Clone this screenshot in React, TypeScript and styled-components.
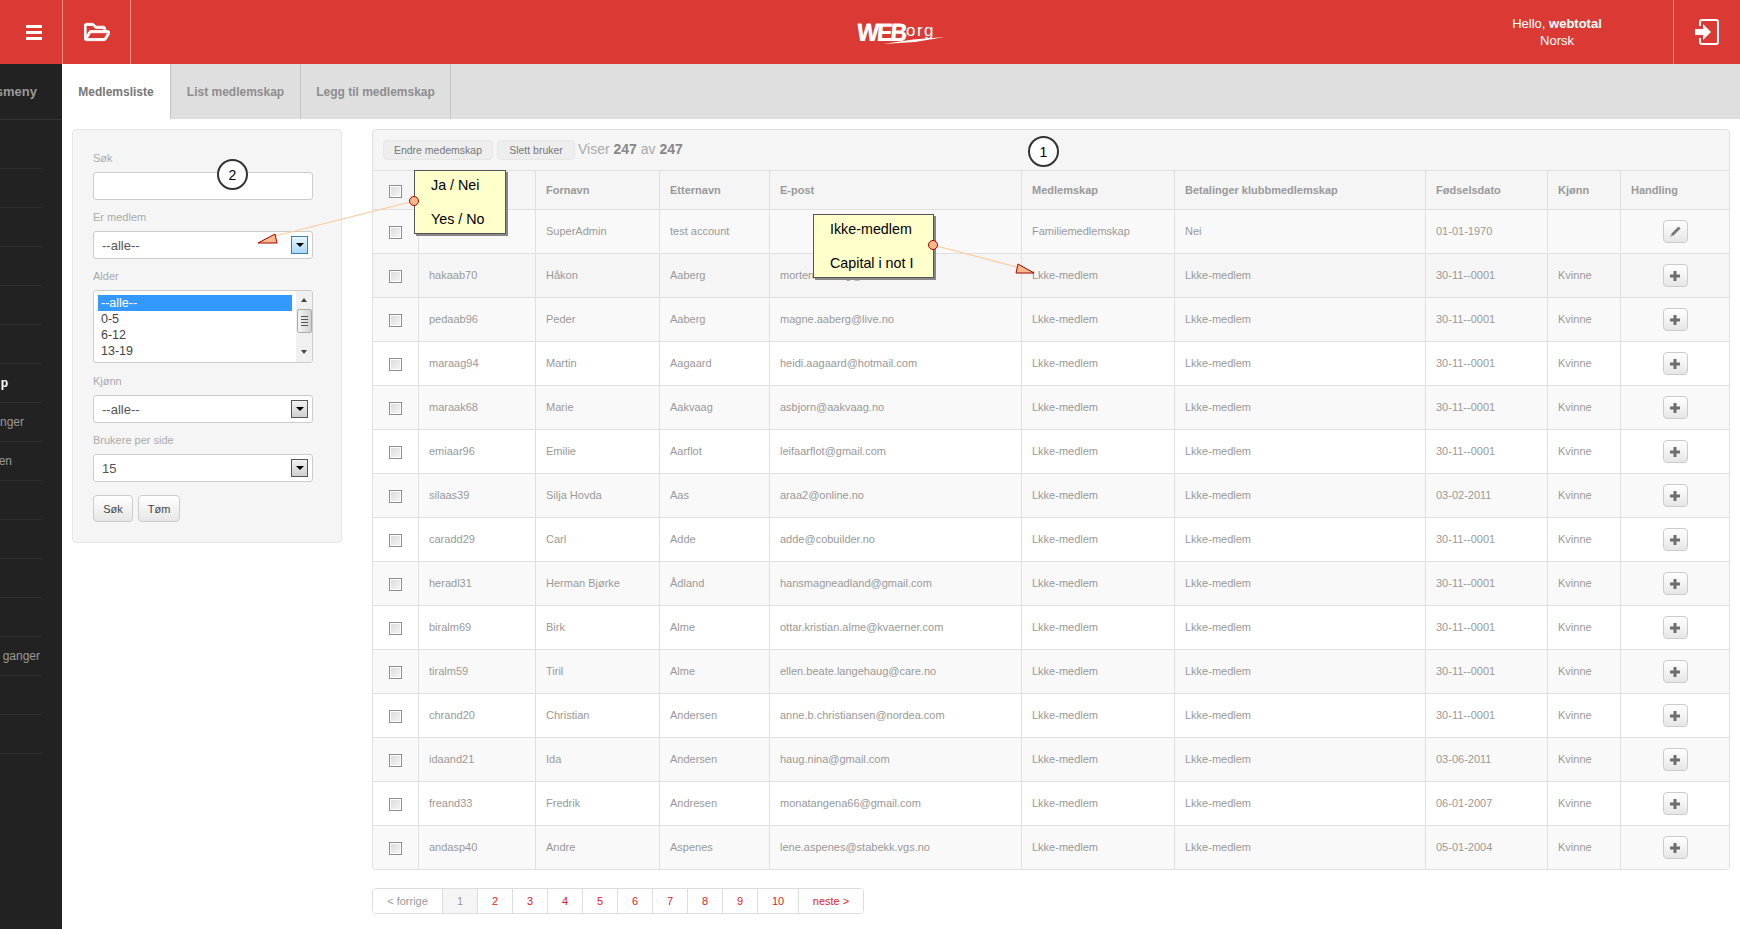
import React from "react";
import styled, { createGlobalStyle } from "styled-components";
import { FaRegFolderOpen } from "react-icons/fa";

const Global = createGlobalStyle`
  html, body { margin: 0; padding: 0; background: #fff; }
  body { font-family: "Liberation Sans", Arial, sans-serif; }
  * { box-sizing: border-box; }
`;

const Page = styled.div`
  position: relative;
  width: 1740px;
  height: 929px;
  overflow: hidden;
  display: flex;
  flex-direction: column;
`;

const Header = styled.header`
  height: 64px;
  flex: none;
  display: flex;
  align-items: stretch;
  background: #db3a34;
  color: #fff;
`;

const HeaderCell = styled.div<{ $w: number; $side?: "left" | "right" }>`
  width: ${(p) => p.$w}px;
  flex: none;
  display: flex;
  align-items: center;
  justify-content: center;
  border-${(p) => (p.$side === "left" ? "left" : "right")}: 1px solid #ee8a86;
`;

const Burger = styled.span`
  display: flex;
  flex-direction: column;
  gap: 3px;
  width: 16px;
  margin-left: 6px;
  & > i { display: block; height: 3px; background: #fff; }
`;

const LogoArea = styled.div`
  flex: 1;
  display: flex;
  align-items: center;
  justify-content: center;
  padding-left: 202px;
`;

const Logo = styled.div`
  position: relative;
  width: 88px;
  height: 28px;
  display: flex;
  align-items: center;
  color: #fff;
  white-space: nowrap;
`;

const LogoWeb = styled.span`
  width: 48px;
  font-size: 25px;
  font-weight: 700;
  letter-spacing: -2px;
  line-height: 27px;
  transform: scaleX(0.92) skewX(-5deg);
  transform-origin: left center;
  text-shadow: 0.6px 0 0 #fff;
`;

const LogoOrg = styled.span`
  font-size: 17px;
  letter-spacing: 1.5px;
  line-height: 17px;
  margin-left: 1px;
  margin-top: -3px;
`;

const Swoosh = styled.svg`
  position: absolute;
  left: 26px;
  top: 19px;
`;

const UserBlock = styled.div`
  width: 204px;
  flex: none;
  display: flex;
  flex-direction: column;
  align-items: center;
  justify-content: center;
  gap: 3px;
  padding-right: 28px;
  font-size: 13px;
  line-height: 14px;
`;

const Body = styled.div`
  flex: 1;
  display: flex;
  min-height: 0;
`;

const Sidebar = styled.nav`
  width: 62px;
  flex: none;
  background: #222;
  overflow: hidden;
`;

const SideTitle = styled.div`
  height: 56px;
  display: flex;
  align-items: center;
  justify-content: flex-end;
  padding: 0 25px 1px 0;
  border-bottom: 1px solid #333;
  color: #999;
  font-size: 13px;
  font-weight: 700;
`;

const SideItem = styled.div<{ $end: number; $tall?: boolean; $active?: boolean }>`
  width: 42px;
  height: ${(p) => (p.$tall ? 49 : 39)}px;
  display: flex;
  align-items: center;
  justify-content: flex-end;
  padding-right: ${(p) => 42 - p.$end}px;
  border-bottom: 1px solid #2e2e2e;
  color: ${(p) => (p.$active ? "#fff" : "#999")};
  font-size: 12px;
  font-weight: ${(p) => (p.$active ? 700 : 400)};
  white-space: nowrap;
`;

const Main = styled.main`
  flex: 1;
  min-width: 0;
  display: flex;
  flex-direction: column;
`;

const Tabs = styled.div`
  height: 55px;
  flex: none;
  display: flex;
  background: #e0dfdf;
`;

const Tab = styled.div<{ $w: number; $active?: boolean }>`
  width: ${(p) => p.$w}px;
  display: flex;
  align-items: center;
  justify-content: center;
  background: ${(p) => (p.$active ? "#fff" : "transparent")};
  border-right: 1px solid #c4c4c4;
  color: ${(p) => (p.$active ? "#777" : "#8d8d8d")};
  font-size: 12px;
  font-weight: 700;
`;

const Content = styled.div`
  flex: 1;
  display: flex;
  align-items: flex-start;
  gap: 30px;
  padding: 10px 11px 0 10px;
`;

const FilterPanel = styled.form`
  width: 270px;
  height: 414px;
  flex: none;
  padding: 20px 28px 0 20px;
  background: #f5f5f5;
  border: 1px solid #e6e6e6;
  border-radius: 4px;
`;

const FieldLabel = styled.label`
  display: block;
  height: 16px;
  margin-bottom: 6px;
  color: #aaa;
  font-size: 11px;
  line-height: 16px;
`;

const Field = styled.div<{ $gap?: number }>`
  margin-bottom: ${(p) => p.$gap ?? 9}px;
`;

const TextBox = styled.div`
  height: 28px;
  background: #fff;
  border: 1px solid #ccc;
  border-radius: 3px;
`;

const SelectBox = styled(TextBox)`
  display: flex;
  align-items: center;
  justify-content: space-between;
  padding: 0 4px 0 8px;
  color: #555;
  font-size: 13px;
`;

const SelectArrow = styled.span<{ $hot?: boolean }>`
  width: 17px;
  height: 18px;
  display: flex;
  align-items: center;
  justify-content: center;
  border: 1px solid ${(p) => (p.$hot ? "#3c7fb1" : "#555")};
  background: ${(p) =>
    p.$hot
      ? "linear-gradient(#eaf6fd, #a7d9f5)"
      : "linear-gradient(#f2f2f2, #cfcfcf)"};
  &::after {
    content: "";
    border-style: solid;
    border-width: 4px 4px 0;
    border-color: #000 transparent transparent;
  }
`;

const ListBox = styled.div`
  height: 73px;
  display: flex;
  background: #fff;
  border: 1px solid #ccc;
  border-radius: 3px;
  overflow: hidden;
`;

const Options = styled.div`
  flex: 1;
  padding: 4px 4px 0 4px;
`;

const Option = styled.div<{ $selected?: boolean }>`
  height: 16px;
  padding-left: 3px;
  color: ${(p) => (p.$selected ? "#fff" : "#444")};
  background: ${(p) => (p.$selected ? "#3399ff" : "transparent")};
  font-size: 12.5px;
  line-height: 16px;
`;

const ScrollTrack = styled.div`
  width: 16px;
  flex: none;
  display: flex;
  flex-direction: column;
  align-items: center;
  padding-top: 7px;
  background: #f0f0f0;
`;

const ScrollUp = styled.span`
  border-style: solid;
  border-width: 0 3.5px 4px;
  border-color: transparent transparent #444;
`;

const ScrollThumb = styled.span`
  width: 15px;
  height: 24px;
  margin: 7px 0 17px;
  display: flex;
  flex-direction: column;
  align-items: center;
  justify-content: center;
  gap: 2px;
  border: 1px solid #aaa;
  border-radius: 2px;
  background: linear-gradient(90deg, #f4f4f4, #d2d2d2);
  & > i { display: block; width: 7px; height: 1px; background: #555; }
`;

const ScrollDown = styled.span`
  border-style: solid;
  border-width: 4px 3.5px 0;
  border-color: #444 transparent transparent;
`;

const FormButtons = styled.div`
  display: flex;
  gap: 5px;
`;

const FormButton = styled.button<{ $w: number }>`
  width: ${(p) => p.$w}px;
  height: 27px;
  padding: 0;
  border: 1px solid #ccc;
  border-radius: 4px;
  background: linear-gradient(#fff, #e6e6e6);
  color: #444;
  font: 11px "Liberation Sans", Arial, sans-serif;
`;

const TablePanel = styled.section`
  width: 1358px;
  flex: none;
  background: #f5f5f5;
  border: 1px solid #e0e0e0;
  border-radius: 4px;
  overflow: hidden;
`;

const Toolbar = styled.div`
  height: 41px;
  display: flex;
  align-items: flex-start;
  gap: 4px;
  padding: 10px 0 0 10px;
  border-bottom: 1px solid #e0e0e0;
`;

const ToolButton = styled.button<{ $w: number }>`
  width: ${(p) => p.$w}px;
  height: 20px;
  padding: 0;
  border: 1px solid #e6e6e6;
  border-radius: 4px;
  background: #eee;
  color: #777;
  font: 10.5px "Liberation Sans", Arial, sans-serif;
`;

const Counter = styled.div`
  margin-left: -1px;
  color: #aaa;
  font-size: 14px;
  line-height: 19px;
  & > b { color: #888; }
`;

const Table = styled.table`
  width: 1356px;
  table-layout: fixed;
  border-collapse: separate;
  border-spacing: 0;
`;

const Th = styled.th`
  height: 39px;
  padding: 0 10px;
  background: #f5f5f5;
  border-bottom: 1px solid #e0e0e0;
  border-right: 1px solid #e0e0e0;
  color: #999;
  font-size: 11px;
  font-weight: 700;
  text-align: left;
  &:last-child { border-right: 0; }
`;

const Td = styled.td`
  height: 44px;
  padding: 0 10px 2px;
  border-bottom: 1px solid #e0e0e0;
  border-right: 1px solid #e0e0e0;
  color: #999;
  font-size: 11px;
  white-space: nowrap;
  text-align: left;
  &:last-child { border-right: 0; }
`;

const ActionCell = styled(Td)`
  padding: 0;
  text-align: center;
`;

const CheckCell = styled(Td)`
  padding: 0;
  text-align: center;
`;

const CheckHead = styled(Th)`
  padding: 0;
  text-align: center;
`;

const Row = styled.tr<{ $bg: string }>`
  background: ${(p) => p.$bg};
  &:last-child > td { border-bottom: 0; height: 43px; }
`;

const Check = styled.input.attrs({ type: "checkbox" })`
  appearance: none;
  display: inline-block;
  width: 13px;
  height: 13px;
  margin: 2px 0 0;
  vertical-align: middle;
  border: 1px solid #8e8e8e;
  outline: 0;
  background: linear-gradient(135deg, #d8d8d8, #f6f6f6);
  box-shadow: inset 0 0 0 1px #fff;
`;

const ActionButton = styled.button`
  width: 25px;
  height: 23px;
  padding: 0;
  display: inline-flex;
  align-items: center;
  justify-content: center;
  vertical-align: middle;
  border: 1px solid #ccc;
  border-radius: 4px;
  background: linear-gradient(#fff, #e6e6e6);
`;

const Pager = styled.div`
  display: inline-flex;
  align-self: flex-start;
  height: 26px;
  margin-top: 18px;
  background: #fff;
  border: 1px solid #ddd;
  border-radius: 4px;
  overflow: hidden;
`;

const PageCell = styled.span<{ $w: number; $state?: "muted" | "current" }>`
  width: ${(p) => p.$w}px;
  display: flex;
  align-items: center;
  justify-content: center;
  border-right: 1px solid #ddd;
  background: ${(p) => (p.$state === "current" ? "#f5f5f5" : "#fff")};
  color: ${(p) => (p.$state ? "#999" : "#e3202a")};
  font-size: 11px;
  &:last-child { border-right: 0; }
`;

const TableColumn = styled.div`
  display: flex;
  flex-direction: column;
`;

const Callout = styled.div<{ $x: number; $y: number; $w: number; $h: number }>`
  position: absolute;
  left: ${(p) => p.$x}px;
  top: ${(p) => p.$y}px;
  width: ${(p) => p.$w}px;
  height: ${(p) => p.$h}px;
  padding: 4px 0 0 16px;
  display: flex;
  flex-direction: column;
  gap: 14px;
  background: #ffffcc;
  border: 1px solid #555;
  box-shadow: 2px 2px 0 #888;
  color: #000;
  font-size: 14.3px;
  line-height: 20px;
`;

const Badge = styled.div<{ $x: number; $y: number }>`
  position: absolute;
  left: ${(p) => p.$x}px;
  top: ${(p) => p.$y}px;
  width: 31px;
  height: 31px;
  display: flex;
  align-items: center;
  justify-content: center;
  background: #fff;
  border: 2px solid #333;
  border-radius: 50%;
  color: #000;
  font-size: 14px;
`;

const Overlay = styled.svg`
  position: absolute;
  left: 0;
  top: 0;
  pointer-events: none;
`;

type R = [string, string, string, string, string?];
const rows: R[] = [
  ["hakaab70", "Håkon", "Aaberg", "morten.aaberg@hotmail.no"],
  ["pedaab96", "Peder", "Aaberg", "magne.aaberg@live.no"],
  ["maraag94", "Martin", "Aagaard", "heidi.aagaard@hotmail.com"],
  ["maraak68", "Marie", "Aakvaag", "asbjorn@aakvaag.no"],
  ["emiaar96", "Emilie", "Aarflot", "leifaarflot@gmail.com"],
  ["silaas39", "Silja Hovda", "Aas", "araa2@online.no", "03-02-2011"],
  ["caradd29", "Carl", "Adde", "adde@cobuilder.no"],
  ["heradl31", "Herman Bjørke", "Ådland", "hansmagneadland@gmail.com"],
  ["biralm69", "Birk", "Alme", "ottar.kristian.alme@kvaerner.com"],
  ["tiralm59", "Tiril", "Alme", "ellen.beate.langehaug@care.no"],
  ["chrand20", "Christian", "Andersen", "anne.b.christiansen@nordea.com"],
  ["idaand21", "Ida", "Andersen", "haug.nina@gmail.com", "03-06-2011"],
  ["freand33", "Fredrik", "Andresen", "monatangena66@gmail.com", "06-01-2007"],
  ["andasp40", "Andre", "Aspenes", "lene.aspenes@stabekk.vgs.no", "05-01-2004"],
];

const columns = [46, 117, 124, 110, 252, 153, 251, 122, 73, 108];
const heads = ["", "Brukernavn", "Fornavn", "Etternavn", "E-post", "Medlemskap", "Betalinger klubbmedlemskap", "Fødselsdato", "Kjønn", "Handling"];

const sideItems: { text: string; end: number; active?: boolean }[] = [
  { text: "", end: 0 }, { text: "", end: 0 }, { text: "", end: 0 }, { text: "", end: 0 }, { text: "", end: 0 }, { text: "", end: 0 },
  { text: "p", end: 8, active: true },
  { text: "nger", end: 24 },
  { text: "en", end: 12 },
  { text: "", end: 0 }, { text: "", end: 0 }, { text: "", end: 0 }, { text: "", end: 0 },
  { text: "ganger", end: 40 },
  { text: "", end: 0 }, { text: "", end: 0 },
];

const pages: { label: string; w: number; state?: "muted" | "current" }[] = [
  { label: "< forrige", w: 70, state: "muted" },
  { label: "1", w: 35, state: "current" },
  ...["2", "3", "4", "5", "6", "7", "8", "9"].map((label) => ({ label, w: 35 })),
  { label: "10", w: 41 },
  { label: "neste >", w: 64 },
];

const Pencil = () => (
  <svg width="14" height="14" viewBox="0 0 14 14">
    <path d="M10.5 1.5l2 2L5 11l-2-2z" fill="#777" />
    <path d="M3 9l2 2-3 1z" fill="#aaa" />
  </svg>
);

const Plus = () => (
  <svg width="10" height="10" viewBox="0 0 10 10">
    <path d="M3.5 0h3v3.5H10v3H6.500V10h-3V6.500H0v-3h3.500z" fill="#6e6e6e" />
  </svg>
);

const SignIn = () => (
  <svg width="24" height="26" viewBox="0 0 24 26">
    <path d="M5 7V3a2 2 0 0 1 2-2h14a2 2 0 0 1 2 2v20a2 2 0 0 1-2 2H7a2 2 0 0 1-2-2v-4" fill="none" stroke="#fff" strokeWidth="2" />
    <path d="M0 10h8V5l8 8-8 8v-5H0z" fill="#fff" />
  </svg>
);

export default function App() {
  return (
    <Page>
      <Global />
      <Header>
        <HeaderCell $w={63}>
          <Burger><i /><i /><i /></Burger>
        </HeaderCell>
        <HeaderCell $w={68}>
          <FaRegFolderOpen size={26} color="#fff" stroke="#fff" strokeWidth={18} />
        </HeaderCell>
        <LogoArea>
          <Logo>
            <LogoWeb>WEB</LogoWeb>
            <LogoOrg>org</LogoOrg>
            <Swoosh width="62" height="8" viewBox="0 0 62 8">
              <path d="M0 7 L30 2.500 L62 0 L32 5 Z" fill="#fff" />
            </Swoosh>
          </Logo>
        </LogoArea>
        <UserBlock>
          <span>Hello, <b>webtotal</b></span>
          <span>Norsk</span>
        </UserBlock>
        <HeaderCell $w={67} $side="left">
          <SignIn />
        </HeaderCell>
      </Header>
      <Body>
        <Sidebar>
          <SideTitle>smeny</SideTitle>
          {sideItems.map((it, i) => (
            <SideItem key={i} $end={it.end} $tall={i === 0} $active={it.active}>
              {it.text}
            </SideItem>
          ))}
        </Sidebar>
        <Main>
          <Tabs>
            <Tab $w={109} $active>Medlemsliste</Tab>
            <Tab $w={130}>List medlemskap</Tab>
            <Tab $w={150}>Legg til medlemskap</Tab>
          </Tabs>
          <Content>
            <FilterPanel>
              <Field>
                <FieldLabel>Søk</FieldLabel>
                <TextBox />
              </Field>
              <Field>
                <FieldLabel>Er medlem</FieldLabel>
                <SelectBox>--alle--<SelectArrow $hot /></SelectBox>
              </Field>
              <Field $gap={10}>
                <FieldLabel>Alder</FieldLabel>
                <ListBox>
                  <Options>
                    <Option $selected>--alle--</Option>
                    <Option>0-5</Option>
                    <Option>6-12</Option>
                    <Option>13-19</Option>
                    <Option>20-25</Option>
                  </Options>
                  <ScrollTrack>
                    <ScrollUp />
                    <ScrollThumb><i /><i /><i /><i /></ScrollThumb>
                    <ScrollDown />
                  </ScrollTrack>
                </ListBox>
              </Field>
              <Field>
                <FieldLabel>Kjønn</FieldLabel>
                <SelectBox>--alle--<SelectArrow /></SelectBox>
              </Field>
              <Field $gap={13}>
                <FieldLabel>Brukere per side</FieldLabel>
                <SelectBox>15<SelectArrow /></SelectBox>
              </Field>
              <FormButtons>
                <FormButton type="button" $w={40}>Søk</FormButton>
                <FormButton type="button" $w={42}>Tøm</FormButton>
              </FormButtons>
            </FilterPanel>
            <TableColumn>
              <TablePanel>
                <Toolbar>
                  <ToolButton $w={110}>Endre medemskap</ToolButton>
                  <ToolButton $w={78}>Slett bruker</ToolButton>
                  <Counter>Viser <b>247</b> av <b>247</b></Counter>
                </Toolbar>
                <Table>
                  <colgroup>
                    {columns.map((w, i) => <col key={i} width={w} />)}
                  </colgroup>
                  <thead>
                    <tr>
                      <CheckHead><Check readOnly /></CheckHead>
                      {heads.slice(1).map((h) => <Th key={h}>{h}</Th>)}
                    </tr>
                  </thead>
                  <tbody>
                    <Row $bg="#f9f9f9">
                      <CheckCell><Check readOnly /></CheckCell>
                      <Td>webtotal</Td>
                      <Td>SuperAdmin</Td>
                      <Td>test account</Td>
                      <Td />
                      <Td>Familiemedlemskap</Td>
                      <Td>Nei</Td>
                      <Td>01-01-1970</Td>
                      <Td />
                      <ActionCell><ActionButton><Pencil /></ActionButton></ActionCell>
                    </Row>
                    {rows.map((r, i) => (
                      <Row key={r[0]} $bg={i === 0 ? "#f5f5f5" : i % 2 === 0 ? "#fff" : "#f9f9f9"}>
                        <CheckCell><Check readOnly /></CheckCell>
                        <Td>{r[0]}</Td>
                        <Td>{r[1]}</Td>
                        <Td>{r[2]}</Td>
                        <Td>{r[3]}</Td>
                        <Td>Lkke-medlem</Td>
                        <Td>Lkke-medlem</Td>
                        <Td>{r[4] ?? "30-11--0001"}</Td>
                        <Td>Kvinne</Td>
                        <ActionCell><ActionButton><Plus /></ActionButton></ActionCell>
                      </Row>
                    ))}
                  </tbody>
                </Table>
              </TablePanel>
              <Pager>
                {pages.map((p) => (
                  <PageCell key={p.label} $w={p.w} $state={p.state}>{p.label}</PageCell>
                ))}
              </Pager>
            </TableColumn>
          </Content>
        </Main>
      </Body>
      <Overlay width="1740" height="929" viewBox="0 0 1740 929">
        <path d="M414 201L275 236" stroke="#fdcb9e" strokeWidth="1.2" fill="none" />
        <path d="M258 243L275 234L277 243Z" fill="#f9b98a" stroke="#a80000" />
        <path d="M933 245L1020 268" stroke="#fdcb9e" strokeWidth="1.2" fill="none" />
        <path d="M1016 273L1018 264L1034 273Z" fill="#f9b98a" stroke="#a80000" />
      </Overlay>
      <Callout $x={414} $y={170} $w={92} $h={64}>
        <span>Ja / Nei</span>
        <span>Yes / No</span>
      </Callout>
      <Callout $x={813} $y={214} $w={121} $h={64}>
        <span>Ikke-medlem</span>
        <span>Capital i not I</span>
      </Callout>
      <Overlay width="1740" height="929" viewBox="0 0 1740 929">
        <circle cx="414" cy="201" r="4.5" fill="#f9b98a" stroke="#a80000" />
        <circle cx="933" cy="245" r="4.5" fill="#f9b98a" stroke="#a80000" />
      </Overlay>
      <Badge $x={217} $y={159}>2</Badge>
      <Badge $x={1028} $y={136}>1</Badge>
    </Page>
  );
}
